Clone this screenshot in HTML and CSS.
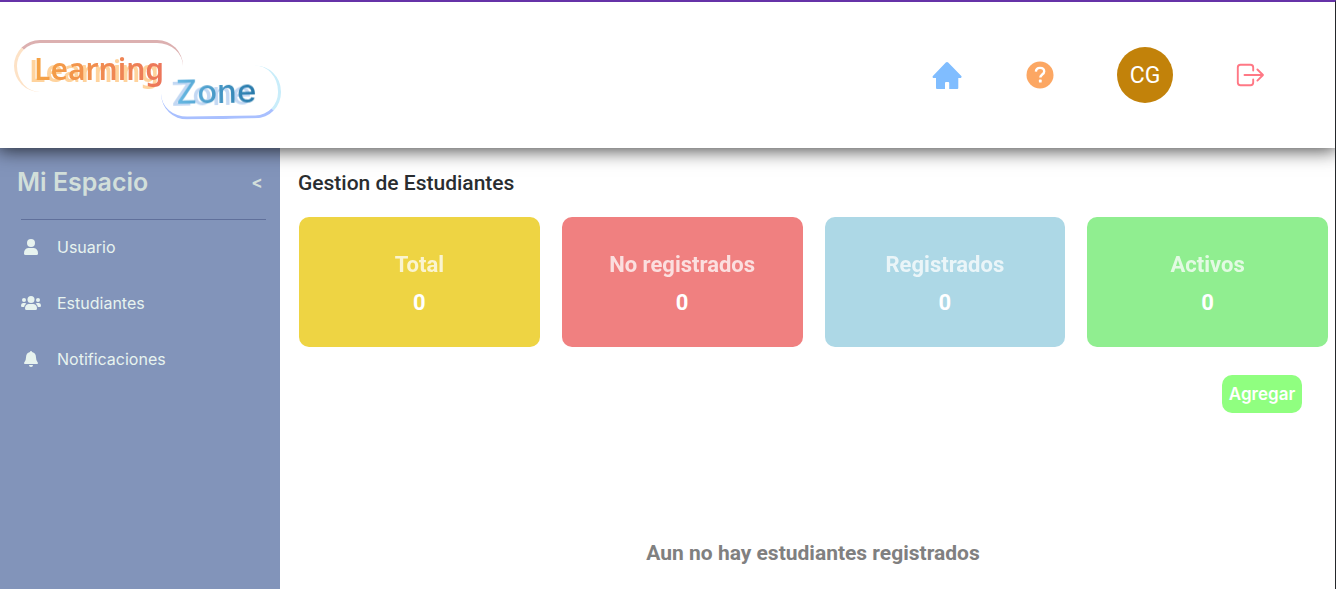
FILE: index.html
```
<!DOCTYPE html>
<html lang="es">
<head>
<meta charset="utf-8">
<meta name="viewport" content="width=device-width, initial-scale=1">
<title>Learning Zone</title>
<link rel="stylesheet" href="styles.css">
</head>
<body>
<div class="app">
  <header class="header">
    <a class="logo" href="#" aria-label="Learning Zone">
      <span class="pill pill-learning"><span class="word word-learning">Learning</span></span>
      <span class="pill pill-zone"><span class="word word-zone">Zone</span></span>
    </a>
    <nav class="actions" aria-label="Principal">
      <a class="action" href="#" aria-label="Inicio">
        <svg width="32" height="32" viewBox="0 0 32 32"><path fill="#80bdff" d="M16 3q.7 0 1.200.6L30.300 17q.7.900 0 1.600-.4.500-1.200.5H27.300V29q0 1-1 1H18.200V24q0-1-1-1h-2.200q-1 0-1 1v6H6q-1 0-1-1V19H3q-1 0-1.300-.6-.4-.8.200-1.500L14.800 3.600Q15.300 3 16 3Z"/></svg>
      </a>
      <a class="action" href="#" aria-label="Ayuda">
        <svg width="32" height="32" viewBox="0 0 32 32"><circle cx="16" cy="16" r="13.500" fill="#fca763"/><path d="M11.900 12.600C12 10.300 13.700 8.900 16 8.900c2.400 0 4.200 1.300 4.200 3.500 0 3.100-3.900 3.200-3.900 6.200" fill="none" stroke="#fff" stroke-width="2.400"/><rect x="14.900" y="20.600" width="2.800" height="2.900" rx=".6" fill="#fff"/></svg>
      </a>
      <a class="avatar" href="#">CG</a>
      <a class="action" href="#" aria-label="Salir">
        <svg width="32" height="32" viewBox="0 0 32 32" fill="none" stroke="#ff7885" stroke-width="1.900" stroke-linecap="round" stroke-linejoin="round"><path d="M19.200 11.500V8.500q0-2.700-2.700-2.700h-10Q3.800 5.800 3.800 8.500v15q0 2.700 2.700 2.700h10q2.700 0 2.700-2.700V20.500M10.500 16H29M23.400 10.500l5.600 5.500-5.600 5.600"/></svg>
      </a>
    </nav>
  </header>
  <div class="body">
    <aside class="sidebar">
      <div class="side-head">
        <h2 class="side-title">Mi Espacio</h2>
        <button class="collapse" type="button" aria-label="Contraer menú">&lt;</button>
      </div>
      <nav class="menu" aria-label="Mi Espacio">
        <a class="menu-item" href="#"><svg width="20" height="18" viewBox="0 0 20 18" fill="#e7f3ef"><circle cx="10" cy="5" r="4"/><path d="M3 15.500q0-5 4.200-5.500h5.600q4.200.5 4.200 5.500 0 1.500-1.500 1.500h-11Q3 17 3 15.500Z"/></svg>Usuario</a>
        <a class="menu-item" href="#"><svg width="20" height="18" viewBox="0 0 20 18" fill="#e7f3ef"><circle cx="10" cy="5.500" r="3.500"/><circle cx="3" cy="6" r="2"/><circle cx="17" cy="6" r="2"/><path d="M4 14.500q0-4 3.500-4.500h5q3.500.5 3.500 4.500 0 1.500-1.500 1.500h-9Q4 16 4 14.500ZM0 11.500Q0 9 2 9h2q.7 0 1.300.5Q3.300 11 3.100 13H1q-1 0-1-1.500ZM20 11.500Q20 9 18 9h-2q-.7 0-1.300.5 2 1.500 2.200 3.500H19q1 0 1-1.500Z"/></svg>Estudiantes</a>
        <a class="menu-item" href="#"><svg width="20" height="18" viewBox="0 0 20 18" fill="#e7f3ef"><path d="M9 2.100V2q0-1 1-1t1 1v.1Q15 3 15 7.500q0 3 1.600 4.700.4.400.4 1 0 .8-1 .8H4q-1 0-1-.8 0-.6.400-1Q5 10.500 5 7.500 5 3 9 2.100ZM8 15h4q0 2-2 2t-2-2Z"/></svg>Notificaciones</a>
      </nav>
    </aside>
    <main class="content">
      <h1 class="title">Gestion de Estudiantes</h1>
      <section class="cards">
        <article class="card total"><h3 class="card-name">Total</h3><p class="card-value">0</p></article>
        <article class="card pending"><h3 class="card-name">No registrados</h3><p class="card-value">0</p></article>
        <article class="card registered"><h3 class="card-name">Registrados</h3><p class="card-value">0</p></article>
        <article class="card active"><h3 class="card-name">Activos</h3><p class="card-value">0</p></article>
      </section>
      <div class="toolbar"><button class="add" type="button">Agregar</button></div>
      <p class="empty">Aun no hay estudiantes registrados</p>
    </main>
  </div>
</div>
</body>
</html>
```
FILE: styles.css
```
* { box-sizing: border-box; }
body { margin: 0; font-family: Roboto, sans-serif; background: #fff; color: #292d30; }
h1, h2, h3, p { margin: 0; }
a { color: inherit; text-decoration: none; }
button { border: 0; padding: 0; font-family: inherit; cursor: pointer; }
svg { display: block; }
.app { min-height: 100vh; display: flex; flex-direction: column; border-top: 2px solid #6633a8; border-right: 1px solid #25282b; }

.header { position: relative; z-index: 1; display: flex; justify-content: space-between; align-items: center; height: 146px; padding: 0 69px 0 14px; background: #fff; box-shadow: 0 0 18px 2px rgba(0, 0, 0, .75); clip-path: inset(0 0 -30px 0); }
.logo { display: flex; align-items: flex-start; height: 80px; margin-top: 10px; }
.pill { display: flex; align-items: center; border: 0 solid; border-radius: 26px; }
.pill-learning { width: 169px; height: 52px; padding: 2px 0 0 17px; border-width: 3px 0 0 3px; border-color: #dcb0b0 transparent transparent #fde2c6; }
.pill-zone { width: 120px; height: 53px; margin: 26px 0 0 -22px; padding-left: 15px; border-width: 0 3px 3px 0; border-color: transparent #c9edfa #a9c0ff transparent; transform: rotate(-1deg); }
.word { background-clip: text; -webkit-background-clip: text; color: transparent; line-height: 36px; }
.word-learning { font: 600 30px/36px "Noto Sans", sans-serif; background-image: linear-gradient(90deg, #f5a344, #ec755b); filter: drop-shadow(-5px 2px 0 rgba(255, 192, 116, .7)); }
.word-zone { font: 500 33px/36px Inter, sans-serif; background-image: linear-gradient(90deg, #68b9e4, #2678a9); filter: drop-shadow(-5px 2px 0 rgba(155, 190, 235, .6)); }
.actions { display: flex; align-items: center; gap: 61px; }
.avatar { display: grid; place-items: center; width: 56px; height: 56px; border-radius: 50%; background: #c2820a; color: #fff; font-size: 23px; }

.body { flex: 1; display: flex; }
.sidebar { flex: 0 0 280px; background: #8294ba; padding: 16px 14px 0 18px; font-family: Inter, sans-serif; }
.side-head { display: flex; justify-content: space-between; align-items: center; height: 56px; margin-left: 3px; padding-bottom: 19px; border-bottom: 1px solid #60709b; }
.side-title { margin-left: -4px; font-size: 25px; line-height: 36px; font-weight: 600; color: #d2dfda; }
.collapse { width: 18px; background: none; color: #d2dfda; font: 700 17px/24px Inter, sans-serif; }
.menu { display: flex; flex-direction: column; gap: 28px; padding: 13px 3px; }
.menu-item { display: flex; align-items: center; gap: 16px; height: 28px; font-size: 16px; color: #e7f3ef; }

.content { flex: 1; min-width: 0; padding: 20px 7px 24px 18px; }
.title { font-size: 21px; line-height: 30px; font-weight: 500; }
.cards { display: grid; grid-template-columns: repeat(4, 1fr); gap: 22px; margin: 19px 0 0 1px; }
.card { height: 130px; padding-top: 4px; border-radius: 10px; display: flex; flex-direction: column; align-items: center; justify-content: center; gap: 8px; color: #fff; }
.card-name { font-size: 22px; line-height: 30px; font-weight: 700; opacity: .75; }
.card-value { font-size: 22px; line-height: 30px; font-weight: 700; }
.total { background: #eed443; }
.pending { background: #f08080; }
.registered { background: #add8e6; }
.active { background: #90ee90; }
.toolbar { display: flex; justify-content: flex-end; padding: 28px 26px 0 0; }
.add { width: 80px; height: 38px; border-radius: 10px; background: #90ff80; color: #fff; font: 600 17px/24px Inter, sans-serif; }
.empty { margin-top: 125px; text-align: center; font-size: 21px; line-height: 30px; font-weight: 700; color: #808080; }
```
